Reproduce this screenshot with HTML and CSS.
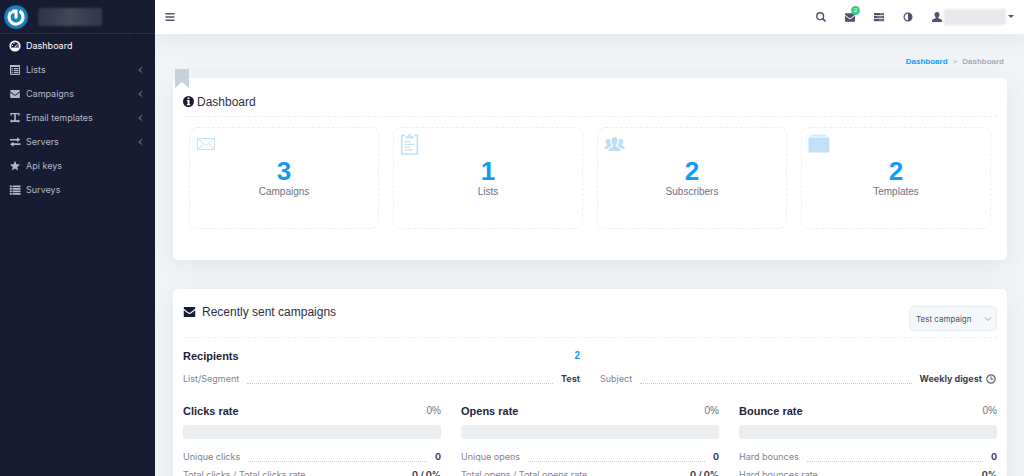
FILE: index.html
```html
<!DOCTYPE html>
<html lang="en">
<head>
<meta charset="utf-8">
<title>Dashboard</title>
<link rel="stylesheet" href="styles.css">
</head>
<body>
<svg class="defs" aria-hidden="true">
  <symbol id="envelope" viewBox="0 0 12 10"><path d="M.5 0h11L12 .6v1L6.900 5.500Q6 6.100 5.100 5.500L0 1.600v-1zM0 2.900l4.600 3.600q1.400.9 2.800 0L12 2.900V9.500l-.5.5H.5L0 9.500z"/></symbol>
  <symbol id="chevron" viewBox="0 0 5 6"><path d="M4 .5 1 3l3 2.500" fill="none" stroke="currentColor"/></symbol>
</svg>
<div class="app">
  <aside class="sidebar">
    <div class="brand">
      <svg class="logo" viewBox="0 0 24 24"><circle cx="12" cy="12" r="12" fill="#126fb0"/><circle cx="12" cy="12" r="11" fill="#1b7fc0"/><path d="M7 7.200A7 7 0 1 0 15.500 6" fill="none" stroke="#fff" stroke-width="3.200"/><path d="M8.500 4.500h5v9h-3V8L5.500 9z" fill="#fff"/></svg>
      <span class="mask mask-dark"></span>
    </div>
    <nav class="menu">
      <a class="item active" href="#"><svg class="ico" viewBox="0 0 12 12"><circle cx="6" cy="6" r="4.700" fill="none" stroke="currentColor" stroke-width="1.800"/><path d="M3 7.500h6V9L6 10.500 3 9zM5.500 7l3-3.200.3.3L6.800 7zM3 5h1v1H3zM4.500 3h1v1h-1zM8.500 5.500h1v1h-1z"/></svg><span>Dashboard</span></a>
      <a class="item" href="#"><svg class="ico" viewBox="0 0 12 12"><path d="M1.500 1.500h9v9h-9z" fill="none" stroke="currentColor"/><path d="M1 1h10v2H1zM2.500 4h1.300v1.200H2.500zM4.800 4h4.700v1.200H4.800zM2.500 6h1.300v1.200H2.500zM4.800 6h4.700v1.200H4.800zM2.500 8h1.300v1.200H2.500zM4.800 8h4.700v1.200H4.800z"/></svg><span>Lists</span><svg class="chev"><use href="#chevron"/></svg></a>
      <a class="item" href="#"><svg class="ico" viewBox="0 0 12 12"><use href="#envelope" x="1" y="2" width="10" height="8"/></svg><span>Campaigns</span><svg class="chev"><use href="#chevron"/></svg></a>
      <a class="item" href="#"><svg class="ico" viewBox="0 0 12 12"><path d="M1.500 1h9v2.800h-.8L9 2.200H6.800v6h2.400V7.300L11 9 9.200 10.900v-1H2.800v1L1 9l1.800-1.700v.9h2.400v-6H3l-.7 1.600h-.8z"/></svg><span>Email templates</span><svg class="chev"><use href="#chevron"/></svg></a>
      <a class="item" href="#"><svg class="ico" viewBox="0 0 12 12"><path d="M1 3h7V1.200l3.200 2.500L8 6.200V4.500H1zM11.500 7.300h-7V5.800L1 8.200l3.500 2.500V8.900h7z"/></svg><span>Servers</span><svg class="chev"><use href="#chevron"/></svg></a>
      <a class="item" href="#"><svg class="ico" viewBox="0 0 12 12"><path d="m6 .8 1.400 3.500 3.800.2-3 2.400 1 3.700L6 8.500l-3.200 2.100 1-3.700-3-2.400 3.800-.2z"/></svg><span>Api keys</span></a>
      <a class="item" href="#"><svg class="ico" viewBox="0 0 12 12"><path d="M.8 1.500h2v1.700h-2zM3.500 1.500h8v1.700h-8zM.8 4h2v1.700h-2zM3.500 4h8v1.700h-8zM.8 6.500h2v1.700h-2zM3.500 6.500h8v1.700h-8zM.8 9h2v1.700h-2zM3.500 9h8v1.700h-8z"/></svg><span>Surveys</span></a>
    </nav>
  </aside>
  <div class="page">
    <header class="topbar">
      <button class="tool burger" aria-label="Toggle menu"><svg class="t10" viewBox="0 0 10 10"><path d="M.5 1H9.500v1.600H.5zM.5 4.200H9.500v1.600H.5zM.5 7.400H9.500V9H.5z"/></svg></button>
      <div class="tools">
        <button class="tool" aria-label="Search"><svg class="t10" viewBox="0 0 10 10"><circle cx="4.200" cy="4.200" r="3.400" fill="none" stroke="currentColor" stroke-width="1.400"/><path d="m6.600 6.600 2.900 2.900" stroke="currentColor" stroke-width="1.600"/></svg></button>
        <button class="tool mail" aria-label="Messages"><svg class="t10" viewBox="0 0 10 10"><use href="#envelope" x="0" y="1" width="10" height="9"/></svg><span class="badge">2</span></button>
        <button class="tool" aria-label="Tasks"><svg class="t10" viewBox="0 0 10 10"><path d="M0 1h10v2.200H0zM0 4h10v2.200H0zM0 7h10v2.200H0z"/><path d="M6 2h3M3 5h6M5 8h4" stroke="#b9bfce" stroke-width=".7"/></svg></button>
        <button class="tool" aria-label="Contrast"><svg class="t10" viewBox="0 0 10 10"><circle cx="5" cy="5" r="3.900" fill="none" stroke="currentColor" stroke-width="1.200"/><path d="M5 1.200a3.800 3.800 0 0 1 0 7.600z"/></svg></button>
        <button class="tool user" aria-label="Account"><svg class="t10" viewBox="0 0 10 10"><path d="M5 0c1.700 0 2.500 1 2.500 2.600C7.500 4 7 4.900 6.300 5.400v.8L9 7.300c.7.300 1 .8 1 1.700v1H0V9c0-.9.3-1.400 1-1.700l2.700-1.100v-.8C3 4.900 2.500 4 2.500 2.600 2.500 1 3.300 0 5 0z"/></svg><span class="mask mask-light"></span><span class="caret"></span></button>
      </div>
    </header>
    <main class="content">
      <nav class="crumbs" aria-label="Breadcrumb"><a href="#">Dashboard</a><i>&gt;</i><span>Dashboard</span></nav>
      <section class="card overview">
        <svg class="ribbon" viewBox="0 0 14 19"><path d="M0 0h14v19l-7-6-7 6z" fill="#c9d2db"/><path d="M3 3h9M2 6h9M3 9h9" stroke="#b4becb" stroke-dasharray="1 2"/></svg>
        <h2 class="title"><svg class="info" viewBox="0 0 10 10"><circle cx="5" cy="5" r="5"/><path d="M4.100 1.300h1.800v1.400H4.100zM3.500 3.700h2.400v3.600h.7v1H3.500v-1h.7V4.700h-.7z" fill="#fff"/></svg>Dashboard</h2>
        <div class="stats">
          <div class="stat"><svg class="pic" viewBox="0 0 24 24"><path d="M3.500 6.500h17v11h-17zM3.500 6.500l8.500 7 8.500-7M3.500 17.500l6-6M20.500 17.500l-6-6" fill="none" stroke="#bfdff8" stroke-width=".9"/></svg><strong>3</strong><span>Campaigns</span></div>
          <div class="stat"><svg class="pic" viewBox="0 0 24 24"><path d="M7 3.500H3.700V22h15.600V3.500H16" fill="none" stroke="#bfdff8" stroke-width="1.600"/><path d="M7.500 6.500V4.300h2.200Q9.800 2 11.500 2t1.800 2.300h2.200v2.200zM6.500 9h6v1.300h-6zM6.500 11.700h10V13h-10zM6.500 14.400h6v1.300h-6zM6.500 17.200h8v1.300h-8z" fill="#bfdff8"/><circle cx="11.500" cy="4" r=".8" fill="#fff"/></svg><strong>1</strong><span>Lists</span></div>
          <div class="stat"><svg class="pic" viewBox="0 0 24 24"><path d="M12.500 5.200c2.200 0 3.200 1.500 3.100 3.600-.1 2-.8 3.200-1.700 3.900v1.800c1.500.8 4.600 1.500 4.800 4.500H6.300c.2-3 3.300-3.700 4.800-4.500v-1.800c-.9-.7-1.600-1.900-1.700-3.900 0-2.100.9-3.600 3.100-3.600zM6 7c1.200 0 1.900.5 2.300 1.300-.2 2.300.4 3.900 1.500 5-.3 1.300-2.700 1.600-4 3.400H2c0-1.800.9-2.100 3-3v-1C3.800 11.700 3.600 10.400 3.600 9.500 3.600 8 4.500 7 6 7zM19 7c-1.200 0-1.900.5-2.300 1.300.2 2.300-.4 3.900-1.500 5 .3 1.300 2.700 1.600 4 3.400H23c0-1.800-.9-2.100-3-3v-1c1.200-1 1.400-2.300 1.400-3.200C21.400 8 20.500 7 19 7z" fill="#bfdff8"/></svg><strong>2</strong><span>Subscribers</span></div>
          <div class="stat"><svg class="pic" viewBox="0 0 24 24"><path d="m6 2.500-2.500 2.300h18L19 2.500z" fill="#d8ecfb"/><path d="M2.500 5.500h21v15h-21z" fill="#bfdff8"/><path d="M7 9h14M5 12h16M7 15h14M10 18h9" stroke="#dceefc" stroke-dasharray="1 3"/></svg><strong>2</strong><span>Templates</span></div>
        </div>
      </section>
      <section class="card recent">
        <div class="head">
          <h2 class="title wide"><svg class="mailico" viewBox="0 0 12 10"><use href="#envelope"/></svg>Recently sent campaigns</h2>
          <select class="pick" aria-label="Campaign"><option>Test campaign</option></select>
        </div>
        <div class="halves">
          <div>
            <div class="rate"><h3>Recipients</h3><b class="count">2</b></div>
            <div class="row"><span>List/Segment</span><i></i><b>Test</b></div>
          </div>
          <div class="end">
            <div class="row"><span>Subject</span><i></i><b>Weekly digest</b><svg class="clock" viewBox="0 0 10 10"><circle cx="5" cy="5" r="4.200" fill="#f4f4f7" stroke="#636675" stroke-width="1.200"/><path d="M5 2.300v3h2.300" fill="none" stroke="#636675"/></svg></div>
          </div>
        </div>
        <div class="thirds">
          <div>
            <div class="rate"><h3>Clicks rate</h3><span>0%</span></div><div class="bar"></div>
            <div class="row"><span>Unique clicks</span><i></i><b>0</b></div>
            <div class="row"><span>Total clicks / Total clicks rate</span><i></i><b>0 / 0%</b></div>
          </div>
          <div>
            <div class="rate"><h3>Opens rate</h3><span>0%</span></div><div class="bar"></div>
            <div class="row"><span>Unique opens</span><i></i><b>0</b></div>
            <div class="row"><span>Total opens / Total opens rate</span><i></i><b>0 / 0%</b></div>
          </div>
          <div>
            <div class="rate"><h3>Bounce rate</h3><span>0%</span></div><div class="bar"></div>
            <div class="row"><span>Hard bounces</span><i></i><b>0</b></div>
            <div class="row"><span>Hard bounces rate</span><i></i><b>0%</b></div>
          </div>
        </div>
      </section>
    </main>
  </div>
</div>
</body>
</html>
```
FILE: styles.css
```css
* { box-sizing: border-box; }
body { margin: 0; font: 10px/14px "Liberation Sans", Arial, sans-serif; color: #6c7380; }
svg { fill: currentColor; flex: none; display: block; }
a { color: inherit; text-decoration: none; }
button { border: 0; padding: 0; background: none; font: inherit; color: inherit; }
h2, h3 { margin: 0; font-weight: 400; }
.defs { position: absolute; width: 0; height: 0; }
.app { display: flex; height: 100vh; overflow: hidden; }

.sidebar { width: 155px; flex: none; background: #181c32; color: #b3b9cb; font-family: Inter, sans-serif; font-size: 9px; }
.brand { display: flex; align-items: center; gap: 10px; height: 34px; padding-left: 4px; border-bottom: 1px dotted #3b4056; }
.logo { width: 24px; height: 24px; }
.mask { display: block; border-radius: 2px; filter: blur(1px); }
.mask-dark { width: 64px; height: 18px; background: linear-gradient(90deg, #303449, #424659 50%, #34384c); }
.mask-light { width: 62px; height: 16px; background: #e7e9ed; }
.item { display: flex; align-items: center; height: 24px; padding: 0 12px 0 9px; }
.item.active { color: #fff; }
.ico { width: 12px; height: 12px; margin-right: 5px; }
.chev { width: 5px; height: 6px; margin-left: auto; color: #7c829a; }

.page { flex: 1; min-width: 0; display: flex; flex-direction: column; background: #f2f6f9; }
.topbar { display: flex; justify-content: space-between; align-items: center; height: 34px; flex: none; padding: 0 10px 1px; background: #fff; color: #4d546e; box-shadow: 0 4px 30px rgba(40, 60, 80, .1); z-index: 1; }
.t10 { width: 10px; height: 10px; }
.tools { display: flex; align-items: center; gap: 19px; }
.mail { position: relative; }
.badge { position: absolute; left: 6px; top: -6px; width: 9px; height: 9px; border-radius: 50%; background: #34ce8a; color: #fff; font-size: 6px; line-height: 9px; }
.user { display: flex; align-items: center; gap: 2px; }
.caret { border: 3px solid transparent; border-top-color: currentColor; border-bottom: 0; }

.content { flex: 1; overflow: hidden; padding: 21px 17px 0 18px; }
.crumbs { display: flex; justify-content: flex-end; gap: 5px; margin: 0 3px 9px 0; font-size: 8px; font-weight: 700; color: #a7afbc; }
.crumbs a { color: #129bf6; }
.crumbs i { font-style: normal; font-weight: 400; }
.card { position: relative; background: #fff; border-radius: 5px; padding: 0 10px; box-shadow: 0 6px 30px rgba(40, 60, 70, .09); }
.overview { padding-bottom: 31px; margin-bottom: 29px; }
.ribbon { position: absolute; left: 2px; top: -9px; width: 14px; height: 19px; }
.title { display: flex; align-items: center; gap: 3px; font-size: 12px; color: #2b3048; }
.overview .title { height: 39px; padding-top: 9px; border-bottom: 1px dashed #eceff1; }
.info { width: 11px; height: 11px; color: #181c32; }
.stats { display: grid; grid-template-columns: repeat(4, 1fr); gap: 14px; padding: 10px 6px 0; }
.stat { position: relative; height: 102px; border: 1px dashed #eceff2; border-radius: 8px; display: flex; flex-direction: column; align-items: center; padding-top: 29px; }
.stat strong { font-size: 26px; line-height: 28px; color: #129bf6; }
.pic { position: absolute; left: 4px; top: 4px; width: 24px; height: 24px; }

.head { display: flex; justify-content: space-between; align-items: flex-start; height: 49px; border-bottom: 1px dashed #eef0f2; }
.wide { gap: 6px; padding-top: 16px; }
.mailico { width: 13px; height: 10px; color: #181c32; }
.pick { appearance: none; margin-top: 17px; width: 88px; height: 25px; padding: 0 6px; border: 1px solid #e6ecf1; border-radius: 5px; color: #4d5365; font: 8px Inter, sans-serif; background: #f5f8fa url("data:image/svg+xml,%3Csvg xmlns='http://www.w3.org/2000/svg' width='8' height='6'%3E%3Cpath d='M1 1.500l3 3 3-3' fill='none' stroke='%2397a0ad'/%3E%3C/svg%3E") no-repeat right 4px center; }
.halves { display: grid; grid-template-columns: 1fr 1fr; gap: 20px; padding-top: 10px; }
.end { align-self: end; }
.thirds { display: grid; grid-template-columns: repeat(3, 1fr); gap: 20px; padding: 15px 0 20px; }
.rate { display: flex; justify-content: space-between; align-items: center; height: 16px; }
.rate h3 { font-size: 11px; font-weight: 700; color: #1f2439; }
.count { color: #129bf6; }
.halves .row { margin-top: 6px; }
.row { display: flex; align-items: center; height: 18px; font-family: Inter, sans-serif; font-size: 9px; color: #7e8491; }
.row i { flex: 1; align-self: flex-end; margin: 0 8px 4px; border-bottom: 1px dotted #c3c9cf; }
.row b { color: #3c4153; }
.clock { width: 10px; height: 10px; margin: 0 1px 0 4px; }
.bar { height: 14px; margin: 6px 0 9px; border-radius: 3px; background: #ecf0f3; }
```
